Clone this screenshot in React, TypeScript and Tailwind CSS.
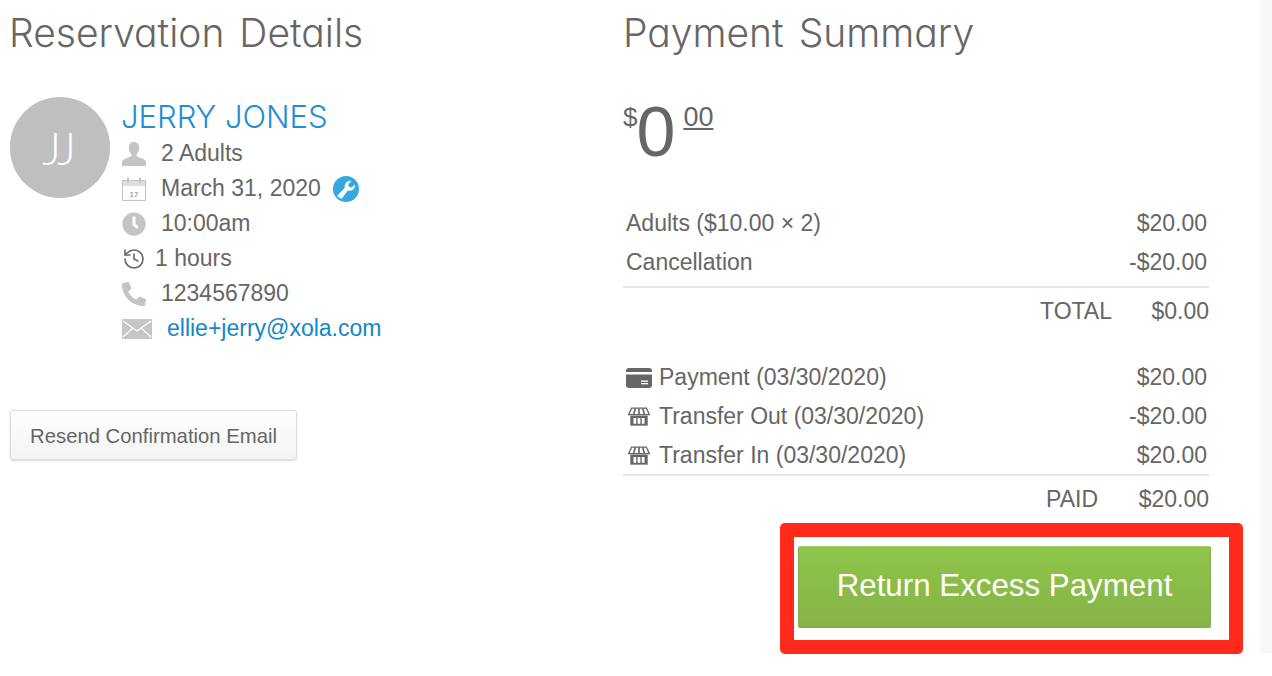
import { History } from "lucide-react";
import { FaClock, FaPhoneAlt } from "react-icons/fa";

const headingClass =
  "font-['Inter',sans-serif] font-light text-[39px] leading-[46px] [word-spacing:4px] text-[#666] [font-feature-settings:'cv11']";

function PersonIcon() {
  return (
    <svg width="24" height="24" viewBox="0 0 24 24" fill="#c4c4c4">
      <path d="M12 0c3.400 0 5.200 2.400 5.200 5.600 0 2.800-1 5.200-2.600 6.600v1.600c0 1 5.200 2.200 8 4 .9.6 1.400 1.600 1.400 2.800V24H0v-3.400c0-1.200.5-2.200 1.400-2.800 2.800-1.800 8-3 8-4v-1.600C7.800 10.800 6.800 8.400 6.800 5.600 6.800 2.400 8.600 0 12 0z" />
    </svg>
  );
}

function CalendarIcon() {
  return (
    <svg width="24" height="24" viewBox="0 0 24 24" className="text-[#c4c4c4]">
      <rect x="0.5" y="3.500" width="23" height="20" fill="#fff" stroke="currentColor" />
      <rect x="0" y="3" width="24" height="6" fill="currentColor" opacity="0.55" />
      <rect x="5" y="0.500" width="2" height="5" fill="currentColor" />
      <rect x="17" y="0.500" width="2" height="5" fill="currentColor" />
      <text x="12" y="20" textAnchor="middle" fontSize="8" fontWeight="700" fill="#aaa">
        17
      </text>
    </svg>
  );
}

function MailIcon() {
  return (
    <svg width="30" height="20" viewBox="0 0 30 20">
      <rect width="30" height="20" rx="1" fill="#c6c6c6" />
      <path d="M1 2l14 10L29 2M1 18l10-9M29 18L19 9" fill="none" stroke="#fff" strokeWidth="1.300" />
    </svg>
  );
}

function WrenchBadge() {
  return (
    <svg width="26" height="26" viewBox="0 0 26 26">
      <circle cx="13" cy="13" r="13" fill="#35a8e0" />
      <path
        d="M22 8.500a5.500 5.500 0 0 1-7.200 6L8.500 23 4 20l7.800-8.200A5.500 5.500 0 0 1 18.500 5l-3.200 3 .6 2.800 2.800.6z"
        fill="#fff"
      />
    </svg>
  );
}

function CardIcon() {
  return (
    <svg width="26" height="20" viewBox="0 0 26 20">
      <rect width="26" height="20" rx="3" fill="#666" />
      <rect y="4" width="26" height="2.500" fill="#fff" />
      <rect x="15" y="12.500" width="7" height="1.300" fill="#fff" />
      <rect x="15" y="15" width="7" height="1.300" fill="#fff" />
    </svg>
  );
}

function StoreIcon() {
  return (
    <svg width="22" height="19" viewBox="0 0 24 20" className="ml-[2px]">
      <path d="M4 .8h16l3.400 7.200H.6z" fill="#fff" stroke="#666" strokeWidth="1.500" />
      <path d="M8 1l-2 7M12 1v7M16 1l2 7" stroke="#666" strokeWidth="1.800" />
      <path d="M2.500 9h19v11h-19z" fill="#666" />
      <path d="M6 11.500h3V18H6zM10.500 11.500h3V18h-3zM15 11.500h3V18h-3z" fill="#fff" />
    </svg>
  );
}

function DetailRow({ icon, gap, children }: { icon: React.ReactNode; gap: string; children: React.ReactNode }) {
  return (
    <div className={`flex h-[35px] items-center ${gap}`}>
      {icon}
      {children}
    </div>
  );
}

function LineRow({ label, amount, icon }: { label: string; amount: string; icon?: React.ReactNode }) {
  return (
    <div className="flex h-[39px] items-center justify-between pl-[3px] pr-[2px]">
      <div className="flex items-center">
        {icon && <div className="mr-[7px] flex w-[26px] items-center">{icon}</div>}
        <span>{label}</span>
      </div>
      <span>{amount}</span>
    </div>
  );
}

function TotalRow({ label, amount, width, height }: { label: string; amount: string; width: string; height: string }) {
  return (
    <div className={`flex items-center justify-end border-t-2 border-[#e6e6e6] ${height}`}>
      <span>{label}</span>
      <span className={`${width} text-right`}>{amount}</span>
    </div>
  );
}

export default function App() {
  return (
    <div className="h-[676px] w-[1272px] overflow-hidden bg-white font-['Liberation_Sans',Arial,sans-serif] text-[23px] text-[#666]">
      <div className="flex h-[653px]">
        <div className="w-[623px] pl-[10px] pt-[10px]">
          <h2 className={`${headingClass} -ml-[1px]`}>Reservation Details</h2>

          <div className="mt-[41px] flex gap-[12px]">
            <div className="flex h-[101px] w-[100px] items-center justify-center rounded-full bg-[#bfbfbf] pr-[5px] font-['Lato',sans-serif] text-[46px] font-light tracking-[-3px] text-white">
              JJ
            </div>
            <div>
              <div className="-ml-[1px] h-[39px] font-['Inter',sans-serif] text-[31px] font-light leading-[40px] text-[#1f8fd1]">
                JERRY JONES
              </div>
              <DetailRow gap="gap-[15px]" icon={<PersonIcon />}>
                2 Adults
              </DetailRow>
              <DetailRow gap="gap-[15px]" icon={<CalendarIcon />}>
                March 31, 2020
                <span className="-ml-[3px]">
                  <WrenchBadge />
                </span>
              </DetailRow>
              <DetailRow gap="gap-[15px]" icon={<FaClock className="h-[24px] w-[24px] text-[#c4c4c4]" />}>
                10:00am
              </DetailRow>
              <DetailRow gap="gap-[9px]" icon={<History className="h-[24px] w-[24px] text-[#666]" strokeWidth={1.6} />}>
                1 hours
              </DetailRow>
              <DetailRow gap="gap-[15px]" icon={<FaPhoneAlt className="h-[24px] w-[24px] text-[#c4c4c4]" />}>
                1234567890
              </DetailRow>
              <DetailRow gap="gap-[15px]" icon={<MailIcon />}>
                <span className="text-[#1487c9]">ellie+jerry@xola.com</span>
              </DetailRow>
            </div>
          </div>

          <button className="mt-[64px] flex h-[50px] w-[287px] items-center justify-center rounded-[3px] border border-[#dcdcdc] bg-gradient-to-b from-white to-[#f3f3f3] pt-[2px] text-[20.300px] text-[#666] shadow-[0_1px_2px_rgba(0,0,0,0.15)]">
            Resend Confirmation Email
          </button>
        </div>

        <div className="flex w-[620px] flex-col pt-[10px]">
          <h2 className={headingClass}>Payment Summary</h2>

          <div className="mt-[38px] flex h-[74px] items-start">
            <span className="mt-[8px] text-[26px] leading-[30px]">$</span>
            <span className="-ml-[1px] text-[70px] leading-[76px]">0</span>
            <span className="ml-[8px] mt-[8px] text-[27px] leading-[30px] underline">00</span>
          </div>

          <div className="mt-[36px] w-[586px]">
            <LineRow label="Adults ($10.00 × 2)" amount="$20.00" />
            <LineRow label="Cancellation" amount="-$20.00" />
            <div className="mt-[4px]">
              <TotalRow label="TOTAL" amount="$0.00" width="w-[97px]" height="h-[48px]" />
            </div>

            <div className="mt-[24px]">
              <LineRow label="Payment (03/30/2020)" amount="$20.00" icon={<CardIcon />} />
              <LineRow label="Transfer Out (03/30/2020)" amount="-$20.00" icon={<StoreIcon />} />
              <LineRow label="Transfer In (03/30/2020)" amount="$20.00" icon={<StoreIcon />} />
            </div>
            <div className="-mt-[1px]">
              <TotalRow label="PAID" amount="$20.00" width="w-[111px]" height="h-[48px]" />
            </div>
          </div>

          <div className="ml-[157px] mt-[1px] w-[463px] rounded-[5px] border-[14px] border-[#ff2a1a] pb-[12px] pl-[4px] pt-[9px]">
            <button className="flex h-[82px] w-[413px] items-center justify-center rounded-[2px] border border-[#85ad4e] border-t-[#a6cf6c] bg-gradient-to-b from-[#8fc54a] to-[#86b347] pb-[1px] text-[31.300px] text-white">
              Return Excess Payment
            </button>
          </div>
        </div>

        <div className="ml-auto w-[12px] bg-[#f8f8f8]" />
      </div>
    </div>
  );
}
